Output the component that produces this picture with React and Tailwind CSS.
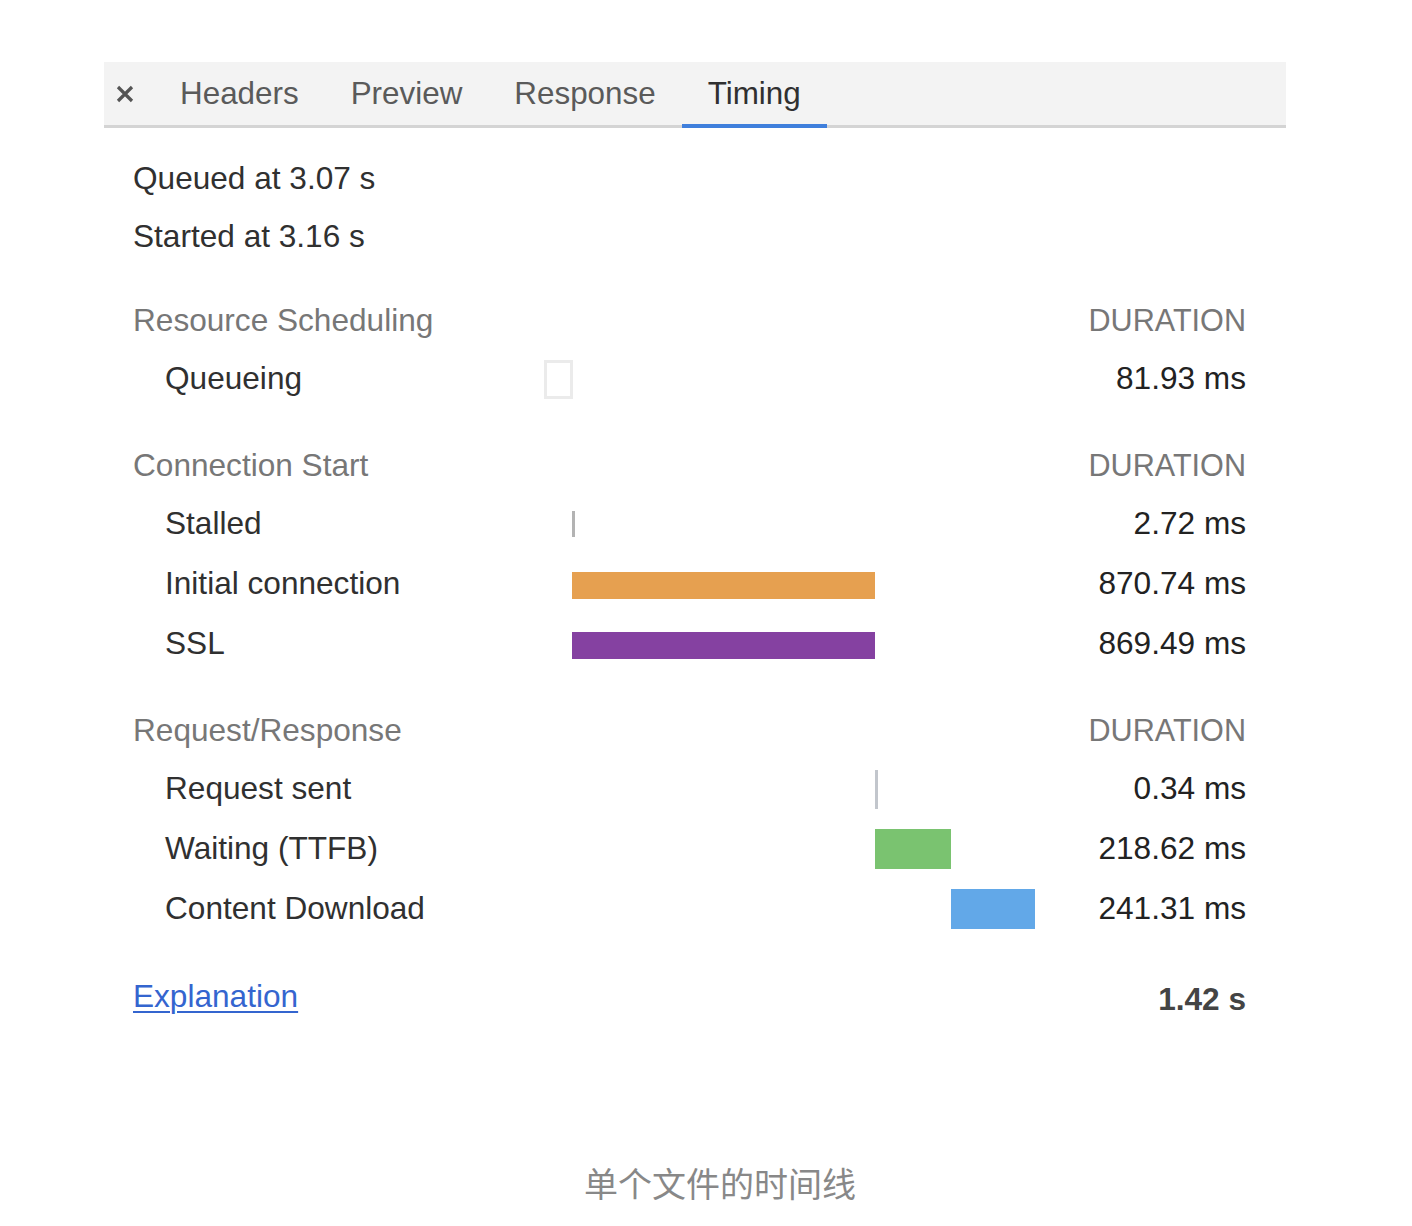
const font = { fontFamily: '"Liberation Sans", Arial, sans-serif' };

function Tab({ label, active }) {
  return (
    <div
      className={
        'relative flex h-full items-center px-[26px] ' +
        (active ? 'text-[#303030]' : 'text-[#5a5a5a]')
      }
    >
      {label}
      {active && <div className="absolute bottom-[-3px] left-0 right-0 h-[4px] bg-[#3f7fdc]" />}
    </div>
  );
}

function SectionHeader({ title }) {
  return (
    <div className="flex h-[56px] items-center justify-between text-[#777777]">
      <span>{title}</span>
      <span className="text-[30.6px]">DURATION</span>
    </div>
  );
}

function Row({ label, value, children }) {
  return (
    <div className="flex h-[60px] items-center">
      <div className="w-[411px] shrink-0 pl-[32px] text-[#303030]">{label}</div>
      <div className="flex w-[502px] shrink-0 items-center">{children}</div>
      <div className="flex-1 text-right text-[#222222]">{value}</div>
    </div>
  );
}

export default function App() {
  return (
    <div className="min-h-[1226px] bg-white pt-[62px] text-[31.6px]" style={font}>
      <div className="ml-[104px] w-[1182px]">
        <div className="flex h-[66px] items-center border-b-[3px] border-[#d4d4d4] bg-[#f3f3f3] text-[31.4px]">
          <div className="flex items-center pl-[12px] pr-[20px]">
            <svg width="18" height="18" viewBox="0 0 18 18">
              <path d="M2 2 L16 16 M16 2 L2 16" stroke="#555555" strokeWidth="3.2" />
            </svg>
          </div>
          <Tab label="Headers" />
          <Tab label="Preview" />
          <Tab label="Response" />
          <Tab label="Timing" active />
        </div>

        <div className="pl-[29px] pr-[40px] pt-[22px]">
          <div className="flex h-[58px] items-center text-[#303030]">Queued at 3.07 s</div>
          <div className="flex h-[58px] items-center text-[#303030]">Started at 3.16 s</div>

          <div className="mt-[27px]">
            <SectionHeader title="Resource Scheduling" />
            <Row label="Queueing" value="81.93 ms">
              <div className="h-[39px] w-[29px] border-[3px] border-[#ebebeb] bg-white" />
            </Row>
          </div>

          <div className="mt-[29px]">
            <SectionHeader title="Connection Start" />
            <Row label="Stalled" value="2.72 ms">
              <div className="ml-[28px] h-[26px] w-[3px] bg-[#b3b3b3]" />
            </Row>
            <Row label="Initial connection" value="870.74 ms">
              <div className="ml-[28px] mt-[2px] h-[27px] w-[303px] bg-[#e6a050]" />
            </Row>
            <Row label="SSL" value="869.49 ms">
              <div className="ml-[28px] mt-[2px] h-[27px] w-[303px] bg-[#8541a1]" />
            </Row>
          </div>

          <div className="mt-[29px]">
            <SectionHeader title="Request/Response" />
            <Row label="Request sent" value="0.34 ms">
              <div className="ml-[331px] h-[39px] w-[3px] bg-[#c2c6cc]" />
            </Row>
            <Row label="Waiting (TTFB)" value="218.62 ms">
              <div className="ml-[331px] h-[40px] w-[76px] bg-[#7ac370]" />
            </Row>
            <Row label="Content Download" value="241.31 ms">
              <div className="ml-[407px] h-[40px] w-[84px] bg-[#62a8e8]" />
            </Row>
          </div>

          <div className="mt-[30px] flex h-[56px] items-center justify-between">
            <a
              href="#"
              className="text-[#3465cf] underline decoration-2 underline-offset-[4px]"
            >
              Explanation
            </a>
            <span className="pt-[6px] font-bold text-[#444444]">1.42 s</span>
          </div>
        </div>
      </div>

      <div
        className="mt-[132px] flex h-[50px] items-center justify-center pl-[28px] text-[34px] text-[#888888]"
        style={{ fontFamily: '"Noto Sans CJK SC", sans-serif' }}
      >
        单个文件的时间线
      </div>
    </div>
  );
}
